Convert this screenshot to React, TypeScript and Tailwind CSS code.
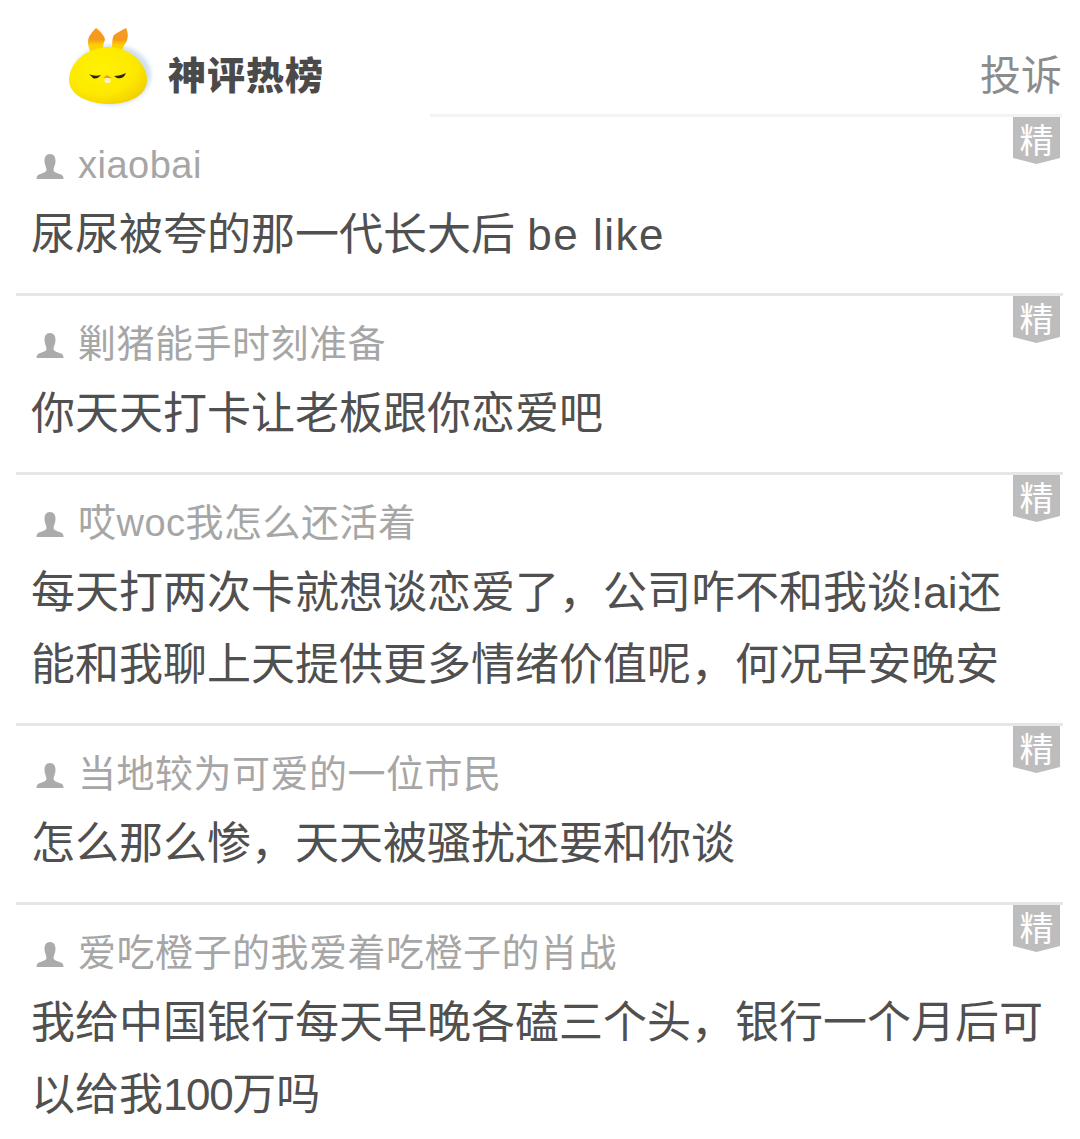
const comments = [
  { name: "xiaobai", lines: [<>尿尿被夸的那一代长大后 <span className="tracking-[1.5px]">be like</span></>] },
  { name: "剿猪能手时刻准备", lines: ["你天天打卡让老板跟你恋爱吧"] },
  {
    name: "哎woc我怎么还活着",
    lines: ["每天打两次卡就想谈恋爱了，公司咋不和我谈!ai还", "能和我聊上天提供更多情绪价值呢，何况早安晚安"],
  },
  { name: "当地较为可爱的一位市民", lines: ["怎么那么惨，天天被骚扰还要和你谈"] },
  {
    name: "爱吃橙子的我爱着吃橙子的肖战",
    lines: ["我给中国银行每天早晚各磕三个头，银行一个月后可", <>以给我<span className="tracking-[-1.4px]">100</span>万吗</>],
  },
];

function BunnyLogo() {
  return (
    <svg width="88" height="84" viewBox="66 24 88 84" className="shrink-0">
      <defs>
        <radialGradient id="body" cx="0.4" cy="0.38" r="0.75">
          <stop offset="0" stopColor="#fff200" />
          <stop offset="0.6" stopColor="#fde900" />
          <stop offset="1" stopColor="#eec800" />
        </radialGradient>
        <linearGradient id="ear" x1="0" y1="0" x2="0" y2="1">
          <stop offset="0.45" stopColor="#f59a1e" />
          <stop offset="0.65" stopColor="#fdd000" />
        </linearGradient>
        <filter id="soft">
          <feGaussianBlur stdDeviation="2" />
        </filter>
      </defs>
      <ellipse cx="112" cy="75" rx="39" ry="30" fill="#a9c3de" opacity="0.55" filter="url(#soft)" />
      <path d="M92 54 C88 48 87 42 89 37 C91 33 94 30 96 28 C100 31 105 36 105 40 C103 43 103 48 103 54 Z" fill="url(#ear)" />
      <path d="M112 54 C112 46 112 38 114 35 C118 32 122 30 126 28 C129 34 128 40 125 44 C123 47 122 50 121 54 Z" fill="url(#ear)" />
      <path
        d="M69 80 C69 62 88 47 109 47 C130 47 147 64 147 80 C147 95 130 104 109 104 C88 104 69 95 69 80 Z"
        fill="url(#body)"
      />
      <path d="M89 74 C93 76 97 76 101 75 C99 78 94 80 92 77 Z" fill="#2b2413" />
      <path d="M114 76 C118 76 122 75 126 73 C124 78 120 79 117 78 Z" fill="#2b2413" />
      <path d="M103 78 L107 75 L112 78 Z" fill="#f59a23" />
      <rect x="104.5" y="78" width="6" height="5" rx="2" fill="#fff3c9" />
    </svg>
  );
}

function UserIcon() {
  return (
    <svg width="28" height="28" viewBox="0 0 28 28" className="shrink-0 mt-1">
      <path
        d="M14 1 C18 1 19.5 4 19.5 8 C19.5 12 17.5 14 17.5 17 C17.5 19 21 20 25 21.5 C27 22.5 27.5 24 27.5 26 L0.5 26 C0.5 24 1 22.5 3 21.5 C7 20 10.5 19 10.5 17 C10.5 14 8.5 12 8.5 8 C8.5 4 10 1 14 1 Z"
        fill="#ababab"
      />
    </svg>
  );
}

function BestBadge() {
  return (
    <div className="absolute top-0 right-[3px] w-[47px] h-[47px] bg-[#bdbdbd] [clip-path:polygon(0_0,100%_0,100%_87%,50%_100%,0_87%)] flex items-start justify-center text-[34px] leading-[48px] text-white">
      精
    </div>
  );
}

export default function App() {
  return (
    <div className="w-[1080px] h-[1139px] overflow-hidden bg-white font-['Liberation_Sans','Noto_Sans_CJK_SC',sans-serif]">
      <header className="relative h-[117px] flex items-start pt-6 pl-[66px] pr-[18px]">
        <BunnyLogo />
        <span className="ml-[14px] mt-[33px] text-[38px] font-black leading-none tracking-[1px] text-[#4a4a4a]">
          神评热榜
        </span>
        <span className="ml-auto mt-8 text-[41px] leading-none text-[#8c8c8c]">投诉</span>
        <div className="absolute bottom-0 left-[430px] right-[18px] h-[3px] bg-[#f3f3f3]" />
      </header>

      <main className="pl-4 pr-[17px]">
        {comments.map((comment, index) => (
          <section
            key={comment.name}
            className={`relative pt-[26px] pb-[22px] ${index === 0 ? "" : "border-t-[3px] border-[#e6e6e6]"}`}
          >
            <BestBadge />
            <div className="flex items-center h-[44px] pl-5 gap-[14px] text-[38px] tracking-[0.5px] text-[#a6a6a6]">
              <UserIcon />
              <span className="leading-[44px]">{comment.name}</span>
            </div>
            <div className="mt-3 pl-[15px] text-[44px] leading-[72px] text-[#505050] whitespace-nowrap">
              {comment.lines.map((line, lineIndex) => (
                <p key={lineIndex}>{line}</p>
              ))}
            </div>
          </section>
        ))}
      </main>
    </div>
  );
}
